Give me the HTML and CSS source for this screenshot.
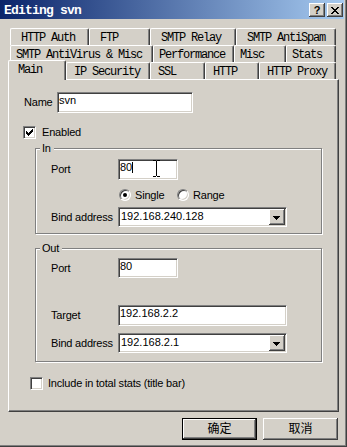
FILE: index.html
```html
<!DOCTYPE html>
<html>
<head>
<meta charset="utf-8">
<title>Editing svn</title>
<link rel="stylesheet" href="styles.css">
</head>
<body>
<div class="window">
  <div class="titlebar">
    <span class="title">Editing svn</span>
    <div class="tbtns">
      <span class="tbtn help">?</span>
      <span class="tbtn close"><svg width="8" height="7" viewBox="0 0 8 7"><path fill="#000" d="M0 0h2v1H0zM6 0h2v1H6zM1 1h2v1H1zM5 1h2v1H5zM2 2h4v1H2zM3 3h2v1H3zM2 4h4v1H2zM1 5h2v1H1zM5 5h2v1H5zM0 6h2v1H0zM6 6h2v1H6z"/></svg></span>
    </div>
  </div>

  <div class="tabs">
    <div class="tabrow r1">
      <span class="tab t-auth">HTTP Auth</span>
      <span class="tab t-ftp">FTP</span>
      <span class="tab t-relay">SMTP Relay</span>
      <span class="tab t-spam">SMTP AntiSpam</span>
    </div>
    <div class="tabrow r2">
      <span class="tab t-virus">SMTP AntiVirus &amp; Misc</span>
      <span class="tab t-perf">Performance</span>
      <span class="tab t-misc">Misc</span>
      <span class="tab t-stats">Stats</span>
    </div>
    <div class="tabrow r3">
      <span class="tab t-main sel">Main</span>
      <span class="tab t-ipsec">IP Security</span>
      <span class="tab t-ssl">SSL</span>
      <span class="tab t-http">HTTP</span>
      <span class="tab t-proxy">HTTP Proxy</span>
    </div>
  </div>

  <div class="panel">
    <div class="name-row">
      <span class="lbl lbl-name">Name</span>
      <div class="edit w-name">svn</div>
    </div>

    <div class="check-row enabled-row">
      <span class="check"><svg width="7" height="7" viewBox="0 0 7 7"><path fill="#000" d="M0 2h1v3H0zM1 3h1v3H1zM2 4h1v3H2zM3 3h1v3H3zM4 2h1v3H4zM5 1h1v3H5zM6 0h1v3H6z"/></svg></span>
      <span class="lbl">Enabled</span>
    </div>

    <div class="group g-in">
      <span class="lbl legend">In</span>
      <div class="grow port-in">
        <span class="lbl col">Port</span>
        <div class="edit w-port h21 cursor-host">80<span class="caret"></span><svg class="ibeam" width="7" height="17" viewBox="0 0 7 17"><path stroke="#000" stroke-width="1" fill="none" d="M0 0.5H3M4 0.5H7M3.5 1V16M0 16.5H3M4 16.5H7"/></svg></div>
      </div>
      <div class="radios">
        <span class="ritem r-single"><span class="radio on"></span><span class="lbl">Single</span></span>
        <span class="ritem"><span class="radio"></span><span class="lbl">Range</span></span>
      </div>
      <div class="grow bind-in">
        <span class="lbl col">Bind address</span>
        <div class="combo"><span class="combo-text">192.168.240.128</span><span class="drop"><svg width="7" height="4" viewBox="0 0 7 4"><path fill="#000" d="M0 0h7v1H6v1H5v1H4v1H3V3H2V2H1V1H0z"/></svg></span></div>
      </div>
    </div>

    <div class="group g-out">
      <span class="lbl legend">Out</span>
      <div class="grow port-out">
        <span class="lbl col">Port</span>
        <div class="edit w-port h20">80</div>
      </div>
      <div class="grow target-row">
        <span class="lbl col">Target</span>
        <div class="edit w-target h21">192.168.2.2</div>
      </div>
      <div class="grow bind-out">
        <span class="lbl col">Bind address</span>
        <div class="combo"><span class="combo-text">192.168.2.1</span><span class="drop"><svg width="7" height="4" viewBox="0 0 7 4"><path fill="#000" d="M0 0h7v1H6v1H5v1H4v1H3V3H2V2H1V1H0z"/></svg></span></div>
      </div>
    </div>

    <div class="check-row include-row">
      <span class="check"></span>
      <span class="lbl">Include in total stats (title bar)</span>
    </div>
  </div>

  <div class="buttons">
    <span class="btn default"><span class="btn-in">确定</span></span>
    <span class="btn"><span class="btn-in">取消</span></span>
  </div>
</div>
</body>
</html>
```

FILE: styles.css
```css
* { box-sizing: border-box; }

html, body {
  margin: 0;
  padding: 0;
}

body {
  width: 347px;
  height: 447px;
  overflow: hidden;
  background: #d4d0c8;
  font-family: "Liberation Sans", Arial, sans-serif;
  font-size: 11px;
  color: #000;
}

.window {
  width: 347px;
  height: 447px;
  background: #d4d0c8;
  box-shadow: inset -1px -1px 0 #404040, inset -2px -2px 0 #808080;
  display: flex;
  flex-direction: column;
}

/* ---------- title bar ---------- */
.titlebar {
  height: 19px;
  margin-right: 3px;
  background: linear-gradient(to right, #0a246a, #a6caf0);
  display: flex;
  align-items: flex-start;
  flex: none;
}

.title {
  color: #fff;
  font-family: "Liberation Mono", monospace;
  font-weight: bold;
  font-size: 13px;
  letter-spacing: -0.8px;
  line-height: 16px;
  padding: 3px 0 0 4px;
  white-space: pre;
}

.tbtns {
  margin: 3px 1px 0 auto;
  display: flex;
  gap: 2px;
}

.tbtn {
  width: 16px;
  height: 14px;
  background: #d4d0c8;
  box-shadow: inset -1px -1px 0 #404040, inset 1px 1px 0 #fff, inset -2px -2px 0 #808080;
  display: flex;
  align-items: center;
  justify-content: center;
  font-family: "Liberation Sans", Arial, sans-serif;
  font-weight: bold;
  font-size: 11px;
  line-height: 11px;
  color: #000;
}

.tbtn.help { padding-top: 1px; }

/* ---------- tabs ---------- */
.tabs {
  margin-top: 9px;
  display: flex;
  flex-direction: column;
  flex: none;
}

.tabrow {
  display: flex;
  align-items: flex-start;
  height: 17px;
  padding-left: 10px;
}

.tab {
  flex: none;
  height: 17px;
  border-top: 1px solid #fff;
  border-left: 1px solid #fff;
  border-right: 1px solid #404040;
  border-radius: 2px 2px 0 0;
  box-shadow: inset -1px 0 0 #808080;
  background: #d4d0c8;
  font-family: "Liberation Mono", monospace;
  font-size: 12px;
  letter-spacing: -1.2px;
  line-height: 13px;
  padding-top: 3px;
  white-space: pre;
  overflow: hidden;
}

.r1 .tab { padding-left: 10px; }
.r2 .tab { padding-left: 5px; }
.r3 .tab { padding-left: 7px; }

.t-auth { width: 79px; }
.t-ftp { width: 61px; }
.t-relay { width: 86px; }
.t-spam { width: 100px; }

.t-virus { width: 143px; }
.t-perf { width: 81px; }
.t-misc { width: 52px; }
.t-stats { width: 50px; }

.t-main { width: 56px; }
.t-ipsec { width: 84px; }
.t-ssl { width: 55px; }
.t-http { width: 54px; }
.t-proxy { width: 77px; }

.r3 .tab.sel {
  position: relative;
  z-index: 1;
  width: 58px;
  height: 20px;
  margin: -2px 0 -1px -2px;
  padding-left: 9px;
}

/* ---------- panel ---------- */
.panel {
  flex: none;
  margin-left: 8px;
  width: 331px;
  height: 333px;
  border-top: 1px solid #fff;
  border-left: 1px solid #fff;
  border-right: 1px solid #404040;
  border-bottom: 1px solid #404040;
  box-shadow: inset -1px -1px 0 #808080;
  display: flex;
  flex-direction: column;
  align-items: flex-start;
}

.lbl {
  line-height: 13px;
  letter-spacing: -0.2px;
  white-space: nowrap;
}

.name-row {
  margin: 12px 0 0 15px;
  display: flex;
  align-items: center;
  height: 21px;
}

.lbl-name { width: 33px; }

.edit {
  position: relative;
  height: 21px;
  background: #fff;
  border: 1px solid;
  border-color: #808080 #fff #fff #808080;
  box-shadow: inset 1px 1px 0 #404040, inset -1px -1px 0 #d4d0c8;
  line-height: 13px;
  padding: 1px 0 0 1px;
  white-space: nowrap;
  overflow: hidden;
}

.h21 { height: 21px; }
.h20 { height: 20px; }

.w-name { width: 136px; }
.w-port { width: 60px; }
.w-target { width: 169px; }

.caret {
  display: inline-block;
  width: 1px;
  height: 11px;
  background: #000;
  vertical-align: -2px;
}

.ibeam {
  position: absolute;
  left: 34px;
  top: 0;
}

.check-row {
  display: flex;
  align-items: center;
  gap: 6px;
  height: 13px;
}

.enabled-row { margin: 13px 0 0 14px; }
.include-row { margin: 15px 0 0 21px; gap: 5px; }

.check {
  flex: none;
  width: 13px;
  height: 13px;
  border: 1px solid;
  border-color: #808080 #fff #fff #808080;
  box-shadow: inset 1px 1px 0 #404040, inset -1px -1px 0 #d4d0c8;
  background: #fff;
  padding: 2px;
  display: flex;
}

/* ---------- group boxes ---------- */
.group {
  width: 287px;
  margin-left: 26px;
  border: 1px solid #808080;
  box-shadow: 1px 1px 0 #fff, inset 1px 1px 0 #fff;
  display: flex;
  flex-direction: column;
  align-items: flex-start;
}

.g-in { margin-top: 9px; padding-bottom: 6px; }
.g-out { margin-top: 14px; padding-bottom: 8px; }

.legend {
  margin: -7px 0 0 4px;
  padding: 0 3px 0 2px;
  background: #d4d0c8;
}

.grow {
  display: flex;
  align-items: center;
  margin-left: 15px;
}

.col { width: 67px; }

.port-in { margin-top: 4px; }
.bind-in { margin-top: 6px; }
.port-out { margin-top: 3px; }
.target-row { margin-top: 27px; }
.bind-out { margin-top: 7px; }

.radios {
  margin: 9px 0 0 83px;
  display: flex;
  align-items: center;
  height: 12px;
}

.ritem {
  display: flex;
  align-items: center;
  gap: 4px;
}

.r-single { width: 58px; }

.radio {
  flex: none;
  width: 12px;
  height: 12px;
  border-radius: 50%;
  border: 1px solid;
  border-color: #808080 #fff #fff #808080;
  box-shadow: inset 1px 1px 0 #404040, inset -1px -1px 0 #d4d0c8;
  background: #fff;
  display: flex;
  align-items: center;
  justify-content: center;
}

.radio.on::after {
  content: "";
  width: 4px;
  height: 4px;
  border-radius: 50%;
  background: #000;
}

.combo {
  width: 169px;
  height: 20px;
  background: #fff;
  border: 1px solid;
  border-color: #808080 #fff #fff #808080;
  box-shadow: inset 1px 1px 0 #404040, inset -1px -1px 0 #d4d0c8;
  padding: 1px 1px 1px 1px;
  display: flex;
  align-items: flex-start;
}

.combo-text {
  flex: 1;
  line-height: 13px;
  padding: 1px 0 0 1px;
  white-space: nowrap;
}

.drop {
  flex: none;
  width: 16px;
  height: 16px;
  background: #d4d0c8;
  box-shadow: inset -1px -1px 0 #404040, inset 1px 1px 0 #fff, inset -2px -2px 0 #808080;
  display: flex;
  align-items: center;
  justify-content: center;
  padding: 1px 1px 0 0;
}

/* ---------- buttons ---------- */
.buttons {
  display: flex;
  justify-content: flex-end;
  gap: 6px;
  margin-top: 6px;
  padding-right: 9px;
}

.btn {
  width: 75px;
  height: 22px;
  display: flex;
  background: #d4d0c8;
}

.btn-in {
  flex: 1;
  display: flex;
  align-items: center;
  justify-content: center;
  box-shadow: inset -1px -1px 0 #404040, inset 1px 1px 0 #fff, inset -2px -2px 0 #808080;
  font-family: "Liberation Sans", "Noto Sans CJK SC", sans-serif;
  font-size: 12px;
  line-height: 14px;
}

.btn.default {
  border: 1px solid #000;
}
```
